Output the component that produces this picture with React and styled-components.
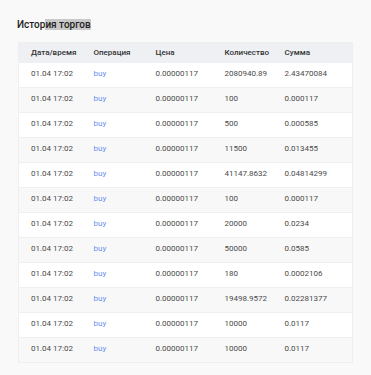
import React from "react";
import styled, { createGlobalStyle } from "styled-components";

const GlobalStyle = createGlobalStyle`
  body {
    margin: 0;
    background-color: #f9f9f9;
    font-family: Roboto, "Liberation Sans", sans-serif;
  }
`;

const trades = [
  { date: "01.04 17:02", op: "buy", price: "0.00000117", amount: "2080940.89", sum: "2.43470084" },
  { date: "01.04 17:02", op: "buy", price: "0.00000117", amount: "100", sum: "0.000117" },
  { date: "01.04 17:02", op: "buy", price: "0.00000117", amount: "500", sum: "0.000585" },
  { date: "01.04 17:02", op: "buy", price: "0.00000117", amount: "11500", sum: "0.013455" },
  { date: "01.04 17:02", op: "buy", price: "0.00000117", amount: "41147.8632", sum: "0.04814299" },
  { date: "01.04 17:02", op: "buy", price: "0.00000117", amount: "100", sum: "0.000117" },
  { date: "01.04 17:02", op: "buy", price: "0.00000117", amount: "20000", sum: "0.0234" },
  { date: "01.04 17:02", op: "buy", price: "0.00000117", amount: "50000", sum: "0.0585" },
  { date: "01.04 17:02", op: "buy", price: "0.00000117", amount: "180", sum: "0.0002106" },
  { date: "01.04 17:02", op: "buy", price: "0.00000117", amount: "19498.9572", sum: "0.02281377" },
  { date: "01.04 17:02", op: "buy", price: "0.00000117", amount: "10000", sum: "0.0117" },
  { date: "01.04 17:02", op: "buy", price: "0.00000117", amount: "10000", sum: "0.0117" },
];

const App = () => {
  return (
    <StPage>
      <GlobalStyle />
      <StTitle>
        Истор<StSelected>ия торгов</StSelected>
      </StTitle>
      <StTable>
        <colgroup>
          <col style={{ width: 75 }} />
          <col style={{ width: 62 }} />
          <col style={{ width: 69 }} />
          <col style={{ width: 60 }} />
          <col />
        </colgroup>
        <thead>
          <tr>
            <StHeadCell>Дата/время</StHeadCell>
            <StHeadCell>Операция</StHeadCell>
            <StHeadCell>Цена</StHeadCell>
            <StHeadCell>Количество</StHeadCell>
            <StHeadCell>Сумма</StHeadCell>
          </tr>
        </thead>
        <tbody>
          {trades.map((t, i) => (
            <StRow key={i} $odd={i % 2 === 1}>
              <StCell>{t.date}</StCell>
              <StCell>
                <StOpLink>{t.op}</StOpLink>
              </StCell>
              <StCell>{t.price}</StCell>
              <StCell>{t.amount}</StCell>
              <StCell>{t.sum}</StCell>
            </StRow>
          ))}
        </tbody>
      </StTable>
    </StPage>
  );
};

export default App;

const StPage = styled.div`
  padding: 19px 18px 14px;
`;

const StTitle = styled.h2`
  margin: 0 0 11px -1px;
  font-size: 10px;
  line-height: 12px;
  font-weight: 500;
  color: #222;
`;

const StSelected = styled.span`
  background-color: #c9c9c9;
`;

const StTable = styled.table`
  width: 335px;
  table-layout: fixed;
  border-collapse: collapse;
  background-color: #fff;
  border: 1px solid #efefef;
`;

const StHeadCell = styled.th`
  height: 19px;
  padding: 0 0 1px 0;
  background-color: #eef0f3;
  font-size: 8px;
  font-weight: 500;
  color: #333;
  text-align: left;
  &:first-child {
    padding-left: 12px;
  }
`;

const StRow = styled.tr`
  background-color: ${(props) => (props.$odd ? "#f8f8f8" : "#fff")};
  border-bottom: 1px solid #efefef;
`;

const StCell = styled.td`
  height: 21px;
  padding: 0 0 3px 0;
  font-size: 8px;
  color: #4a4a4a;
  white-space: nowrap;
  &:first-child {
    padding-left: 12px;
  }
`;

const StOpLink = styled.span`
  color: #6b8ef0;
`;
